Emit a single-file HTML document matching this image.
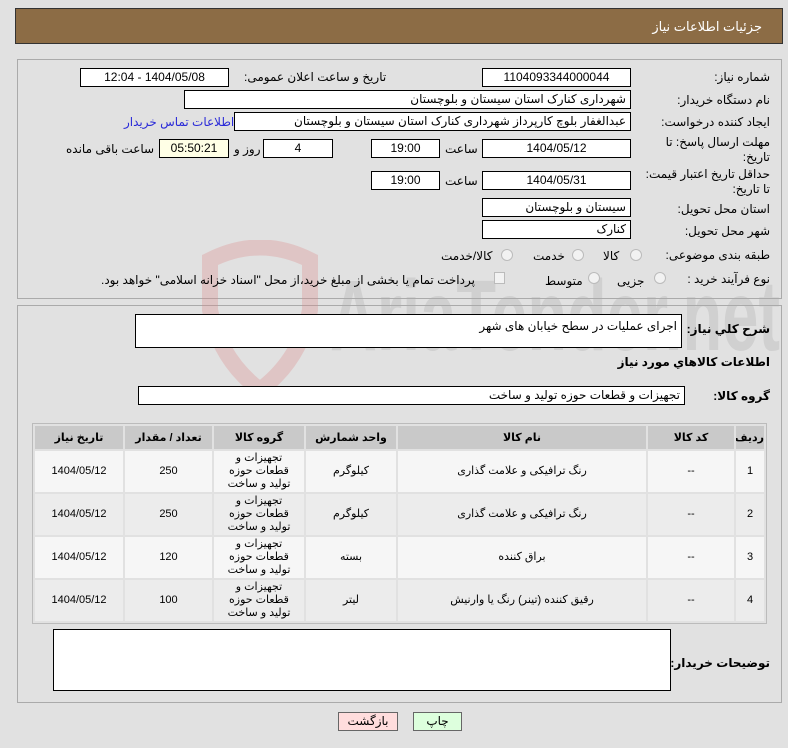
<!DOCTYPE html>
<html><head><meta charset="utf-8"><style>
*{margin:0;padding:0;box-sizing:border-box}
body{width:788px;height:748px;background:#e1e1e1;font-family:"Liberation Sans","DejaVu Sans",sans-serif;font-size:12px;color:#000;position:relative;overflow:hidden}
.a{position:absolute}
.hdr{left:15px;top:8px;width:768px;height:36px;background:#8c6c45;border:1px solid #333;color:#fff;font-size:13px;direction:rtl;padding:10px 20px 0 0}
.panel{border:1px solid #aaa;background:#e1e1e1}
.box{position:absolute;background:#fff;border:1px solid #000;height:19px;direction:rtl;padding:1px 4px;font-size:12px;white-space:nowrap;overflow:hidden}
.c{text-align:center}
.lbl{position:absolute;direction:rtl;white-space:nowrap;font-size:12px}
.rad{position:absolute;width:12px;height:12px;border-radius:50%;border:1px solid #bbb;background:#f2f2f2}
table{position:absolute;left:32px;top:423px;width:735px;table-layout:fixed;border-collapse:separate;border-spacing:2px;background:#e1e1e1;border:1px solid #bbb;direction:rtl;font-size:11px}
th{background:#c9c9c9;height:23px;font-weight:bold;font-size:11px;white-space:nowrap;overflow:hidden}
td{text-align:center;height:41px;line-height:13px;font-size:11px;overflow:hidden}
td.g{padding:0 10px}
tr.o td{background:#f6f6f6}tr.e td{background:#ececec}
.btn{position:absolute;top:712px;height:19px;border:1px solid #666;text-align:center;font-size:12px;padding-top:1px}
</style></head><body>
<div class="a hdr">جزئیات اطلاعات نیاز</div>
<div class="a panel" style="left:17px;top:59px;width:765px;height:240px"></div>
<div class="a panel" style="left:17px;top:305px;width:765px;height:398px"></div>
<svg class="a" style="left:190px;top:240px;opacity:0.3" width="600" height="160" viewBox="0 0 600 160">
<path d="M20 20 Q70 -5 120 20 L120 70 Q110 120 70 150 Q30 120 20 70 Z" fill="none" stroke="#d88" stroke-width="16"/>
<text x="140" y="110" font-family="Liberation Sans" font-weight="bold" font-size="100" fill="#aaa" textLength="450" lengthAdjust="spacingAndGlyphs">AriaTender.net</text>
</svg>
<div class="lbl" style="right:18px;top:70px">شماره نیاز:</div>
<div class="box c" style="left:482px;top:68px;width:149px">1104093344000044</div>
<div class="lbl" style="left:244px;top:70px">تاریخ و ساعت اعلان عمومی:</div>
<div class="box c" style="left:80px;top:68px;width:149px">1404/05/08 - 12:04</div>
<div class="lbl" style="right:18px;top:93px">نام دستگاه خریدار:</div>
<div class="box" style="left:184px;top:90px;width:447px">شهرداری کنارک استان سیستان و بلوچستان</div>
<div class="lbl" style="right:18px;top:115px">ایجاد کننده درخواست:</div>
<div class="box" style="left:234px;top:112px;width:397px">عبدالغفار بلوچ کارپرداز شهرداری کنارک استان سیستان و بلوچستان</div>
<div class="lbl" style="left:124px;top:115px;color:#2a2ad8">اطلاعات تماس خریدار</div>
<div class="lbl" style="right:18px;top:135px;line-height:15px;text-align:right">مهلت ارسال پاسخ: تا<br>تاریخ:</div>
<div class="box c" style="left:482px;top:139px;width:149px">1404/05/12</div>
<div class="lbl" style="left:445px;top:142px">ساعت</div>
<div class="box c" style="left:371px;top:139px;width:69px">19:00</div>
<div class="box c" style="left:263px;top:139px;width:70px">4</div>
<div class="lbl" style="left:234px;top:142px">روز و</div>
<div class="box c" style="left:159px;top:139px;width:70px;background:#ffffe6">05:50:21</div>
<div class="lbl" style="left:66px;top:142px">ساعت باقی مانده</div>
<div class="lbl" style="right:18px;top:167px;line-height:15px;text-align:right">حداقل تاریخ اعتبار قیمت:<br>تا تاریخ:</div>
<div class="box c" style="left:482px;top:171px;width:149px">1404/05/31</div>
<div class="lbl" style="left:445px;top:174px">ساعت</div>
<div class="box c" style="left:371px;top:171px;width:69px">19:00</div>
<div class="lbl" style="right:18px;top:202px">استان محل تحویل:</div>
<div class="box" style="left:482px;top:198px;width:149px">سیستان و بلوچستان</div>
<div class="lbl" style="right:18px;top:224px">شهر محل تحویل:</div>
<div class="box" style="left:482px;top:220px;width:149px">کنارک</div>
<div class="lbl" style="right:18px;top:248px">طبقه بندی موضوعی:</div>
<div class="rad" style="left:630px;top:249px"></div><div class="lbl" style="left:603px;top:249px">کالا</div>
<div class="rad" style="left:572px;top:249px"></div><div class="lbl" style="left:533px;top:249px">خدمت</div>
<div class="rad" style="left:501px;top:249px"></div><div class="lbl" style="left:441px;top:249px">کالا/خدمت</div>
<div class="lbl" style="right:18px;top:272px">نوع فرآیند خرید :</div>
<div class="rad" style="left:654px;top:272px"></div><div class="lbl" style="left:617px;top:274px">جزیی</div>
<div class="rad" style="left:588px;top:272px"></div><div class="lbl" style="left:545px;top:274px">متوسط</div>
<div class="a" style="left:494px;top:272px;width:11px;height:12px;border:1px solid #bbb;background:#f2f2f2"></div>
<div class="lbl" style="left:101px;top:273px">پرداخت تمام یا بخشی از مبلغ خرید،از محل "اسناد خزانه اسلامی" خواهد بود.</div>
<div class="lbl" style="right:18px;top:322px;font-weight:bold">شرح کلي نياز:</div>
<div class="box" style="left:135px;top:314px;width:547px;height:34px;padding-top:4px">اجرای عملیات در سطح خیابان های شهر</div>
<div class="lbl" style="right:18px;top:355px;font-weight:bold">اطلاعات کالاهاي مورد نياز</div>
<div class="lbl" style="right:18px;top:389px;font-weight:bold">گروه کالا:</div>
<div class="box" style="left:138px;top:386px;width:547px">تجهیزات و قطعات حوزه تولید و ساخت</div>
<table>
<colgroup><col style="width:28px"><col style="width:86px"><col style="width:248px"><col style="width:90px"><col style="width:90px"><col style="width:87px"><col></colgroup>
<tr><th>رديف</th><th>کد کالا</th><th>نام کالا</th><th>واحد شمارش</th><th>گروه کالا</th><th>تعداد / مقدار</th><th>تاریخ نیاز</th></tr>
<tr class="o"><td>1</td><td>--</td><td>رنگ ترافیکی و علامت گذاری</td><td>کیلوگرم</td><td class="g">تجهیزات و قطعات حوزه تولید و ساخت</td><td>250</td><td>1404/05/12</td></tr>
<tr class="e"><td>2</td><td>--</td><td>رنگ ترافیکی و علامت گذاری</td><td>کیلوگرم</td><td class="g">تجهیزات و قطعات حوزه تولید و ساخت</td><td>250</td><td>1404/05/12</td></tr>
<tr class="o"><td>3</td><td>--</td><td>براق کننده</td><td>بسته</td><td class="g">تجهیزات و قطعات حوزه تولید و ساخت</td><td>120</td><td>1404/05/12</td></tr>
<tr class="e"><td>4</td><td>--</td><td>رقیق کننده (تینر) رنگ یا وارنیش</td><td>لیتر</td><td class="g">تجهیزات و قطعات حوزه تولید و ساخت</td><td>100</td><td>1404/05/12</td></tr>
</table>
<div class="lbl" style="right:18px;top:656px;font-weight:bold">توضیحات خریدار:</div>
<div class="box" style="left:53px;top:629px;width:618px;height:62px"></div>
<div class="btn" style="left:338px;width:60px;background:#fdd">بازگشت</div>
<div class="btn" style="left:413px;width:49px;background:#dfd">چاپ</div>
</body></html>
